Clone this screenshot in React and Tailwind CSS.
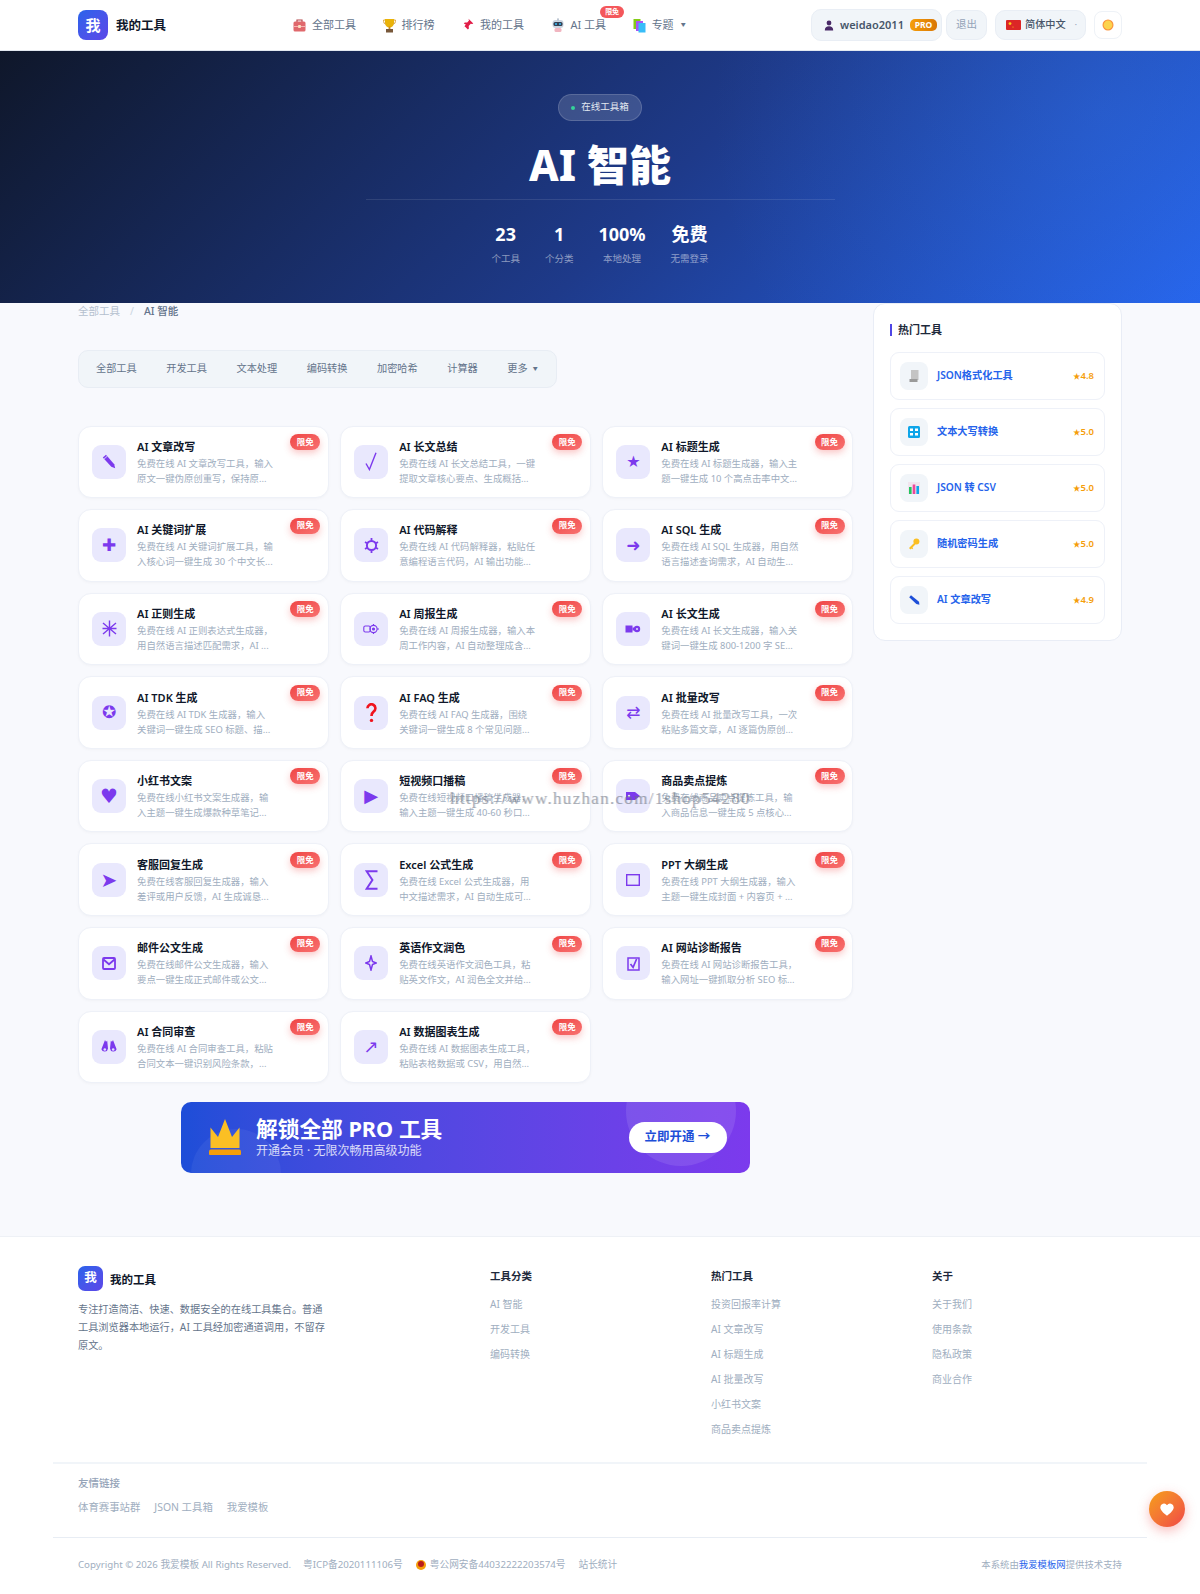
const Toolbox = () => (
  <svg width="13" height="14" viewBox="0 0 13 14">
    <path d="M4 4V2h5v2" fill="none" stroke="#b4464a" strokeWidth="1.2" />
    <rect x="0.5" y="3.5" width="12" height="10" rx="1.5" fill="#e0686c" />
    <rect x="0.5" y="8" width="12" height="1" fill="#f3b5b5" />
    <rect x="5.2" y="7" width="2.6" height="3" fill="#fde2c0" />
  </svg>
);

const Trophy = () => (
  <svg width="13" height="15" viewBox="0 0 13 15">
    <path d="M2 1h9v4a4.5 4.5 0 0 1-9 0z" fill="#eab308" />
    <path d="M2 2H0.6v1.5A2.5 2.5 0 0 0 3 6M11 2h1.4v1.5A2.5 2.5 0 0 1 10 6" fill="none" stroke="#d9a441" />
    <rect x="5.6" y="8.5" width="1.8" height="2.5" fill="#c98a1b" />
    <rect x="3" y="11" width="7" height="3.5" fill="#78583a" />
  </svg>
);

const Pin = () => (
  <svg width="13" height="14" viewBox="0 0 13 14">
    <path d="M7.5 0.8l4.8 4.6-1.2.6-1.4-.2-2 2.2.2 2.4-1 1L3.6 8.2 1 11.6 4.8 6.6 2.8 5.4l1-1 2.4.2 1.8-2z" fill="#e11d48" />
  </svg>
);

const Robot = () => (
  <svg width="14" height="15" viewBox="0 0 14 15">
    <rect x="1.5" y="2" width="11" height="8" rx="3" fill="#cbd5e1" />
    <rect x="2.5" y="4" width="9" height="4" rx="1.5" fill="#334155" />
    <circle cx="5" cy="6" r="1" fill="#38bdf8" />
    <circle cx="9" cy="6" r="1" fill="#38bdf8" />
    <rect x="3.5" y="10" width="7" height="4" rx="1.5" fill="#f1b5c0" />
    <rect x="6.4" y="0.4" width="1.2" height="2" fill="#94a3b8" />
  </svg>
);

const Books = () => (
  <svg width="13" height="15" viewBox="0 0 13 15">
    <rect x="0.5" y="1" width="7" height="10" fill="#84cc16" />
    <rect x="3" y="3" width="7" height="10" fill="#a855f7" />
    <rect x="5.5" y="5" width="7" height="9.5" fill="#38bdf8" />
  </svg>
);

const Person = () => (
  <svg width="10" height="11" viewBox="0 0 10 11">
    <circle cx="5" cy="3" r="2.4" fill="#4a2a68" />
    <path d="M0.8 10.5c0-2.8 1.6-4.2 4.2-4.2s4.2 1.4 4.2 4.2z" fill="#4a2a68" />
  </svg>
);

const Flag = () => (
  <svg width="15" height="10" viewBox="0 0 15 10">
    <rect width="15" height="10" rx="1" fill="#dc2626" />
    <circle cx="4" cy="3.6" r="1.4" fill="#facc15" />
    <circle cx="7" cy="7" r="0.6" fill="#facc15" />
  </svg>
);

const Sun = () => (
  <svg width="12" height="12" viewBox="0 0 12 12">
    <circle cx="6" cy="6" r="5.5" fill="#fb923c" />
    <circle cx="6" cy="6" r="4.4" fill="#fcd34d" />
  </svg>
);

const Pencil = () => (
  <svg width="14" height="15" viewBox="0 0 14 15" fill="#7c3aed">
    <path d="M0.8 3.6L4 0.8l8.2 9.4 1 4-3.9-1.4z" />
    <path d="M1.8 4.6L5 1.8l.6.7-3.2 2.8z" fill="#c4b5fd" />
  </svg>
);

const Check = () => (
  <svg width="12" height="19" viewBox="0 0 12 19" fill="none" stroke="#7c3aed" strokeWidth="1.4">
    <path d="M1 11.5l3.4 6L11 0.8" />
  </svg>
);

const Asterisk = () => (
  <svg width="15" height="17" viewBox="0 0 15 17" fill="none" stroke="#7c3aed" strokeWidth="1.4">
    <path d="M7.5 0.5v16M1 3l13 11M14 3L1 14M0.5 8.5h14" />
  </svg>
);

const Gear = () => (
  <svg width="15" height="17" viewBox="0 0 15 17" fill="none" stroke="#7c3aed">
    <circle cx="7.5" cy="8.5" r="4.6" strokeWidth="2" />
    <path d="M7.5 1v2.4M7.5 13.6V16M1 5l2 1.2M12 10.8l2 1.2M1 12l2-1.2M12 6.2L14 5" strokeWidth="1.8" />
  </svg>
);

const Question = () => (
  <svg width="11" height="20" viewBox="0 0 11 20" fill="none" stroke="#f0141e" strokeWidth="2.6">
    <path d="M1.4 5.2A4 4 0 1 1 7.6 8.6C6 9.8 5.5 10.5 5.5 13" />
    <circle cx="5.5" cy="17.4" r="1.7" fill="#f0141e" stroke="none" />
  </svg>
);

const Sigma = () => (
  <svg width="13" height="20" viewBox="0 0 13 20" fill="none" stroke="#7c3aed" strokeWidth="2">
    <path d="M12.5 1.2H1.6L7.4 10 1.6 18.8h10.9" />
  </svg>
);

const Outline = () => (
  <svg width="14" height="12" viewBox="0 0 14 12" fill="none" stroke="#7c3aed" strokeWidth="1.4">
    <rect x="0.7" y="0.7" width="12.6" height="10.6" />
  </svg>
);

const Mail = () => (
  <svg width="14" height="13" viewBox="0 0 14 13" fill="none" stroke="#7c3aed" strokeWidth="1.8">
    <rect x="1" y="1" width="12" height="11" rx="1" />
    <path d="M1.5 2.5L7 7.2l5.5-4.7" />
  </svg>
);

const Sparkle = () => (
  <svg width="12" height="16" viewBox="0 0 12 16" fill="none" stroke="#7c3aed" strokeWidth="1.5">
    <path d="M6 1l1.5 5.5L11 8 7.5 9.5 6 15 4.5 9.5 1 8l3.5-1.5z" />
  </svg>
);

const CheckBox = () => (
  <svg width="13" height="15" viewBox="0 0 13 15" fill="none" stroke="#7c3aed" strokeWidth="1.5">
    <rect x="1" y="2" width="11" height="12" />
    <path d="M3.5 8l2.6 3.4L9.6 3" strokeWidth="1.7" />
  </svg>
);

const Weekly = () => (
  <svg width="16" height="12" viewBox="0 0 16 12" fill="none" stroke="#7c3aed" strokeWidth="1.1">
    <rect x="0.8" y="3" width="6.5" height="6" rx="1.5" />
    <circle cx="10.5" cy="6" r="3.6" />
    <circle cx="10.5" cy="6" r="1" fill="#7c3aed" />
    <path d="M14 6h2M10.5 1v1.5M10.5 9.5V11" />
  </svg>
);

const Longform = () => (
  <svg width="16" height="10" viewBox="0 0 16 10" fill="#7c3aed">
    <rect x="0.5" y="1.5" width="7" height="7" />
    <path d="M7.5 3.5h2V6.5h-2z" />
    <circle cx="12" cy="5" r="3.2" />
    <circle cx="12" cy="5" r="1" fill="#e0e0fc" />
  </svg>
);

const Goods = () => (
  <svg width="16" height="10" viewBox="0 0 16 10" fill="#7c3aed">
    <path d="M1 1h9l5 4-5 4H1z" />
    <circle cx="4" cy="5" r="1.2" fill="#e0e0fc" />
  </svg>
);

const Contract = () => (
  <svg width="16" height="15" viewBox="0 0 16 15" fill="#7c3aed">
    <path d="M4 1l1 1.8 1.2-1L7 9.5a3.4 3.4 0 0 1-6.6.8z" />
    <path d="M12 1l-1 1.8-1.2-1L9 9.5a3.4 3.4 0 0 0 6.6.8z" />
    <circle cx="3.8" cy="10.5" r="1.3" fill="#e0e0fc" />
    <circle cx="12.2" cy="10.5" r="1.3" fill="#e0e0fc" />
  </svg>
);

const tools = [
  { title: "AI 文章改写", desc: "免费在线 AI 文章改写工具，输入\n原文一键伪原创重写，保持原...", icon: Pencil },
  { title: "AI 长文总结", desc: "免费在线 AI 长文总结工具，一键\n提取文章核心要点、生成概括...", icon: Check },
  { title: "AI 标题生成", desc: "免费在线 AI 标题生成器，输入主\n题一键生成 10 个高点击率中文...", glyph: "★", size: "text-[16px]" },
  { title: "AI 关键词扩展", desc: "免费在线 AI 关键词扩展工具，输\n入核心词一键生成 30 个中文长...", glyph: "✚", size: "text-[17px]" },
  { title: "AI 代码解释", desc: "免费在线 AI 代码解释器，粘贴任\n意编程语言代码，AI 输出功能...", icon: Gear },
  { title: "AI SQL 生成", desc: "免费在线 AI SQL 生成器，用自然\n语言描述查询需求，AI 自动生...", glyph: "➜", size: "text-[17px]" },
  { title: "AI 正则生成", desc: "免费在线 AI 正则表达式生成器，\n用自然语言描述匹配需求，AI ...", icon: Asterisk },
  { title: "AI 周报生成", desc: "免费在线 AI 周报生成器，输入本\n周工作内容，AI 自动整理成含...", icon: Weekly },
  { title: "AI 长文生成", desc: "免费在线 AI 长文生成器，输入关\n键词一键生成 800-1200 字 SE...", icon: Longform },
  { title: "AI TDK 生成", desc: "免费在线 AI TDK 生成器，输入\n关键词一键生成 SEO 标题、描...", glyph: "✪", size: "text-[17px]" },
  { title: "AI FAQ 生成", desc: "免费在线 AI FAQ 生成器，围绕\n关键词一键生成 8 个常见问题...", icon: Question },
  { title: "AI 批量改写", desc: "免费在线 AI 批量改写工具，一次\n粘贴多篇文章，AI 逐篇伪原创...", glyph: "⇄", size: "text-[17px]" },
  { title: "小红书文案", desc: "免费在线小红书文案生成器，输\n入主题一键生成爆款种草笔记...", glyph: "♥", size: "text-[20px]" },
  { title: "短视频口播稿", desc: "免费在线短视频口播稿生成器，\n输入主题一键生成 40-60 秒口...", glyph: "▶", size: "text-[18px]" },
  { title: "商品卖点提炼", desc: "免费在线商品卖点提炼工具，输\n入商品信息一键生成 5 点核心...", icon: Goods },
  { title: "客服回复生成", desc: "免费在线客服回复生成器，输入\n差评或用户反馈，AI 生成诚恳...", glyph: "➤", size: "text-[20px]" },
  { title: "Excel 公式生成", desc: "免费在线 Excel 公式生成器，用\n中文描述需求，AI 自动生成可...", icon: Sigma },
  { title: "PPT 大纲生成", desc: "免费在线 PPT 大纲生成器，输入\n主题一键生成封面 + 内容页 + ...", icon: Outline },
  { title: "邮件公文生成", desc: "免费在线邮件公文生成器，输入\n要点一键生成正式邮件或公文...", icon: Mail },
  { title: "英语作文润色", desc: "免费在线英语作文润色工具，粘\n贴英文作文，AI 润色全文并给...", icon: Sparkle },
  { title: "AI 网站诊断报告", desc: "免费在线 AI 网站诊断报告工具，\n输入网址一键抓取分析 SEO 标...", icon: CheckBox },
  { title: "AI 合同审查", desc: "免费在线 AI 合同审查工具，粘贴\n合同文本一键识别风险条款，...", icon: Contract },
  { title: "AI 数据图表生成", desc: "免费在线 AI 数据图表生成工具，\n粘贴表格数据或 CSV，用自然...", glyph: "↗", size: "text-[18px]" },
];

const navItems = [
  { icon: Toolbox, label: "全部工具" },
  { icon: Trophy, label: "排行榜" },
  { icon: Pin, label: "我的工具" },
  { icon: Robot, label: "AI 工具", badge: true },
  { icon: Books, label: "专题", caret: true },
];

const stats = [
  { value: "23", label: "个工具" },
  { value: "1", label: "个分类" },
  { value: "100%", label: "本地处理" },
  { value: "免费", label: "无需登录" },
];

const categories = ["全部工具", "开发工具", "文本处理", "编码转换", "加密哈希", "计算器"];

const hotTools = [
  {
    name: "JSON格式化工具",
    rating: "4.8",
    icon: (
      <svg width="12" height="14" viewBox="0 0 12 14">
        <rect x="3" y="1" width="7.5" height="10" fill="#c4c4c4" />
        <rect x="1.5" y="10" width="8" height="3" fill="#9a9a9a" />
      </svg>
    ),
  },
  {
    name: "文本大写转换",
    rating: "5.0",
    icon: (
      <svg width="12" height="12" viewBox="0 0 12 12">
        <rect width="12" height="12" rx="1.5" fill="#0ea5e9" />
        <rect x="2" y="2.5" width="3" height="2.5" fill="#fff" />
        <rect x="7" y="2.5" width="3" height="2.5" fill="#fff" />
        <rect x="2" y="7" width="3" height="2.5" fill="#fff" />
        <rect x="7" y="7" width="3" height="2.5" fill="#fff" />
      </svg>
    ),
  },
  {
    name: "JSON 转 CSV",
    rating: "5.0",
    icon: (
      <svg width="12" height="12" viewBox="0 0 12 12">
        <rect width="12" height="12" fill="#f1e4ee" />
        <rect x="1" y="5" width="2.6" height="7" fill="#22c55e" />
        <rect x="4.7" y="2.5" width="2.6" height="9.5" fill="#ec4899" />
        <rect x="8.4" y="4" width="2.6" height="8" fill="#0ea5e9" />
      </svg>
    ),
  },
  {
    name: "随机密码生成",
    rating: "5.0",
    icon: (
      <svg width="12" height="12" viewBox="0 0 12 12">
        <circle cx="8.4" cy="3.6" r="3" fill="#fbbf24" />
        <path d="M6.5 4.5L1 10l1.4 1.4 1-1 .8.8 1-1-.8-.8 3-3z" fill="#fbbf24" />
      </svg>
    ),
  },
  {
    name: "AI 文章改写",
    rating: "4.9",
    icon: (
      <svg width="12" height="12" viewBox="0 0 12 12">
        <path d="M1.2 3.2L3 1.2l8 6.6.4 3-3-.8z" fill="#1d4ed8" />
      </svg>
    ),
  },
];

const footerCols = [
  { title: "工具分类", links: ["AI 智能", "开发工具", "编码转换"] },
  { title: "热门工具", links: ["投资回报率计算", "AI 文章改写", "AI 标题生成", "AI 批量改写", "小红书文案", "商品卖点提炼"] },
  { title: "关于", links: ["关于我们", "使用条款", "隐私政策", "商业合作"] },
];

const ToolCard = ({ tool }) => {
  const Icon = tool.icon;
  return (
    <div className="relative h-[72.6px] flex items-center gap-[11px] pl-[13px] bg-white rounded-[13px] border border-[#eef1f8] shadow-[0_1px_3px_rgba(15,23,42,0.03)]">
      <div className="w-[34px] h-[34px] shrink-0 rounded-[9px] bg-[#e9e8fd] flex items-center justify-center">
        {Icon ? (
          <Icon />
        ) : (
          <span className={`font-['DejaVu_Sans',sans-serif] leading-none text-[#7c3aed] ${tool.size}`}>{tool.glyph}</span>
        )}
      </div>
      <div className="min-w-0 pt-[1px]">
        <div className="text-[11px] leading-[16px] font-semibold text-[#0f172a] whitespace-nowrap">{tool.title}</div>
        <div className="mt-px text-[9.4px] leading-[15px] text-[#a0aec0] whitespace-pre">{tool.desc}</div>
      </div>
      <span className="absolute top-[7.5px] right-[7.5px] w-[30px] h-[16px] rounded-full bg-linear-to-br from-[#ef4444] to-[#f87171] text-white text-[8.5px] font-bold flex items-center justify-center shadow-[0_3px_7px_rgba(239,68,68,0.3)]">
        限免
      </span>
    </div>
  );
};

const Logo = ({ box, text, gap, name }) => (
  <div className={`flex items-center ${gap}`}>
    <div className={`${box} ${text} bg-linear-to-br from-[#2563eb] to-[#5b46e8] text-white font-bold flex items-center justify-center`}>我</div>
    <span className={`${name} mt-[2px] font-bold text-[#0f172a]`}>我的工具</span>
  </div>
);

export default function App() {
  return (
    <div className="relative h-[1594px] flex flex-col bg-[#f8f9fd] font-['Noto_Sans','Noto_Sans_CJK_SC',sans-serif] overflow-hidden">
      <header className="h-[51px] shrink-0 bg-white flex items-center pl-[78px] pr-[78px] border-b border-[#e2e8f0]">
        <div className="w-[214px] shrink-0">
          <Logo box="w-[30px] h-[30px] rounded-[8px]" text="text-[15px]" gap="gap-[8px]" name="text-[12.5px]" />
        </div>
        <nav className="flex items-center gap-[26.5px] ml-[1px]">
          {navItems.map((item) => {
            const Icon = item.icon;
            return (
              <div key={item.label} className="relative flex items-center gap-[6px] text-[11px] text-[#64748b]">
                <Icon />
                <span>{item.label}</span>
                {item.caret && <span className="text-[5px] ml-[1px]">▼</span>}
                {item.badge && (
                  <span className="absolute -top-[11px] -right-[18px] w-[24px] h-[12px] rounded-full bg-[#f4575b] text-white text-[7px] font-bold flex items-center justify-center">
                    限免
                  </span>
                )}
              </div>
            );
          })}
        </nav>
        <div className="ml-auto flex items-center">
          <div className="h-[32px] w-[131px] rounded-[10px] bg-[#f1f5f9] border border-[#e9eef5] flex items-center pl-[12px] gap-[6px] text-[11px] font-semibold text-[#475569]">
            <Person />
            <span>weidao2011</span>
            <span className="w-[27px] h-[12px] rounded-[5px] bg-linear-to-r from-[#f59e0b] to-[#d97706] text-white text-[8.5px] font-bold flex items-center justify-center">PRO</span>
          </div>
          <div className="ml-[4px] h-[30px] w-[41px] rounded-[10px] bg-[#f1f5f9] border border-[#e9eef5] flex items-center justify-center text-[10.5px] text-[#94a3b8]">退出</div>
          <div className="ml-[8px] h-[30px] w-[91px] rounded-[10px] bg-[#f1f5f9] border border-[#e9eef5] flex items-center pl-[10px] gap-[4px] text-[10.2px] font-medium text-[#475569]">
            <Flag />
            <span>简体中文</span>
            <span className="text-[8px] text-[#94a3b8] ml-[5px]">·</span>
          </div>
          <div className="ml-[8px] w-[28px] h-[28px] rounded-[8px] bg-white border border-[#eef2f7] flex items-center justify-center">
            <Sun />
          </div>
        </div>
      </header>

      <section className="relative h-[252px] shrink-0 bg-[radial-gradient(circle_at_92%_25%,rgba(59,130,246,0.22),transparent_35%),linear-gradient(135deg,#0f172a_0%,#1e3a8a_55%,#2563eb_100%)] flex flex-col items-center pt-[43px]">
        <div className="h-[27px] w-[84px] rounded-full bg-white/15 border border-white/15 flex items-center justify-center gap-[6px] text-[9.5px] text-[#e2e8f0]">
          <span className="w-[4px] h-[4px] rounded-full bg-[#34d399]" />
          在线工具箱
        </div>
        <h1 className="mt-[16px] text-[42px] leading-[56px] font-extrabold text-white">AI 智能</h1>
        <div className="mt-[6px] w-[469px] h-px bg-white/10" />
        <div className="mt-[20px] flex gap-[25px]">
          {stats.map((stat) => (
            <div key={stat.label} className="flex flex-col items-center">
              <div className="text-[18px] leading-[28px] font-bold text-white">{stat.value}</div>
              <div className="mt-[4px] text-[9.5px] leading-[14px] text-white/50">{stat.label}</div>
            </div>
          ))}
        </div>
      </section>

      <main className="flex items-start gap-[20px] px-[78px] shrink-0">
        <div className="w-[775px] shrink-0">
          <div className="h-[18px] flex items-center text-[10.5px] text-[#b4bfce]">
            <span>全部工具</span>
            <span className="mx-[10px] text-[#cbd5e1]">/</span>
            <span className="font-medium text-[#64748b]">AI 智能</span>
          </div>
          <div className="mt-[29px] w-[479px] h-[38px] rounded-[10px] bg-[#f1f5f9] border border-[#e8edf4] flex items-center pl-[17px] gap-[29.5px] text-[10.2px] text-[#64748b]">
            {categories.map((cat) => (
              <span key={cat}>{cat}</span>
            ))}
            <span className="flex items-center gap-[5px]">
              更多<span className="text-[5px]">▼</span>
            </span>
          </div>
          <div className="mt-[37.5px] grid grid-cols-3 gap-x-[11.5px] gap-y-[11px]">
            {tools.map((tool) => (
              <ToolCard key={tool.title} tool={tool} />
            ))}
          </div>
          <div className="relative mt-[18.5px] mx-auto w-[569px] h-[71px] rounded-[10px] bg-linear-to-r from-[#1d4ed8] to-[#7c3aed] overflow-hidden flex items-center">
            <div className="absolute left-[10px] top-[27px] w-[90px] h-[90px] rounded-full bg-white/5" />
            <div className="absolute left-[445px] -top-[46px] w-[110px] h-[110px] rounded-full bg-white/10" />
            <svg className="relative ml-[28px] shrink-0" width="32" height="36" viewBox="0 0 32 36">
              <path d="M1.5 8.5L9 18 16 0l7 18 7.5-9.5V29h-29z" fill="#fbbf24" />
              <rect x="0" y="30.5" width="32" height="6" rx="2" fill="#f59e0b" />
            </svg>
            <div className="relative ml-[15px] pt-[1px] text-white">
              <div className="text-[21.7px] leading-[26px] font-bold">解锁全部 PRO 工具</div>
              <div className="text-[12px] leading-[17px] text-white/80">开通会员 · 无限次畅用高级功能</div>
            </div>
            <div className="relative ml-auto mr-[23.5px] w-[98px] h-[31px] pt-[1px] rounded-full bg-white flex items-center justify-center text-[12.5px] font-bold text-[#1d4ed8]">
              立即开通 →
            </div>
          </div>
        </div>

        <aside className="w-[249px] h-[338px] bg-white rounded-[12px] border border-[#e9edf6] px-[16px] pt-[18px]">
          <div className="flex items-center gap-[6px] text-[11px] leading-[16px] font-bold text-[#1e293b]">
            <span className="w-[2px] h-[12px] bg-[#4f46e5]" />
            热门工具
          </div>
          <div className="mt-[14px] flex flex-col gap-[8.5px]">
            {hotTools.map((hot) => (
              <div key={hot.name} className="h-[47.5px] rounded-[9px] border border-[#eef1f8] flex items-center pl-[9px] pr-[10px]">
                <div className="w-[28px] h-[28px] rounded-[8px] bg-[#f1f5f9] flex items-center justify-center">{hot.icon}</div>
                <span className="ml-[9px] text-[10.2px] font-semibold text-[#2563eb]">{hot.name}</span>
                <span className="ml-auto text-[9.5px] font-semibold text-[#f59e0b]">
                  <span className="text-[7.5px]">★</span>
                  {hot.rating}
                </span>
              </div>
            ))}
          </div>
        </aside>
      </main>

      <footer className="flex-1 mt-[63px] bg-white border-t border-[#eef1f6]">
        <div className="grid grid-cols-[412px_221px_221px_1fr] px-[78px] pt-[29px] pb-[24px]">
          <div>
            <Logo box="w-[25px] h-[25px] rounded-[7px]" text="text-[12.5px]" gap="gap-[7px]" name="text-[11.5px]" />
            <p className="mt-[9px] w-[248px] text-[10.2px] leading-[18px] text-[#64748b]">
              专注打造简洁、快速、数据安全的在线工具集合。普通工具浏览器本地运行，AI 工具经加密通道调用，不留存原文。
            </p>
          </div>
          {footerCols.map((col) => (
            <div key={col.title}>
              <div className="text-[10.5px] leading-[20px] font-semibold text-[#1e293b]">{col.title}</div>
              <div className="mt-[9px] flex flex-col gap-[7px] text-[10px] leading-[18px] text-[#a0aec0]">
                {col.links.map((link) => (
                  <span key={link}>{link}</span>
                ))}
              </div>
            </div>
          ))}
        </div>
        <div className="mx-[53px] px-[25px] border-t-2 border-[#f1f5f9] pt-[10px] h-[75px]">
          <div className="text-[10.5px] leading-[18px] font-medium text-[#94a3b8]">友情链接</div>
          <div className="mt-[6px] flex gap-[14px] text-[10.4px] leading-[18px] text-[#a0aec0]">
            <span>体育赛事站群</span>
            <span>JSON 工具箱</span>
            <span>我爱模板</span>
          </div>
        </div>
        <div className="mx-[53px] px-[25px] border-t border-[#e8edf4] flex items-start pt-[18px] text-[9.7px] leading-[18px] text-[#a0aec0]">
          <span>Copyright © 2026 我爱模板 All Rights Reserved.</span>
          <span className="ml-[12px]">粤ICP备2020111106号</span>
          <span className="ml-[13px] flex items-center gap-[4px]">
            <svg width="10" height="12" viewBox="0 0 10 12">
              <circle cx="5" cy="6" r="5" fill="#f59e0b" />
              <circle cx="5" cy="5" r="3" fill="#b91c1c" />
            </svg>
            粤公网安备44032222203574号
          </span>
          <span className="ml-[13px]">站长统计</span>
          <span className="ml-auto text-[9.4px]">
            本系统由<span className="text-[#2563eb]">我爱模板网</span>提供技术支持
          </span>
        </div>
      </footer>

      <div className="absolute left-[450px] top-[786px] font-['Liberation_Serif',serif] text-[17px] tracking-[1.3px] text-[#6b7280]/50 [text-shadow:1px_0_0_rgba(107,114,128,0.25)] whitespace-nowrap pointer-events-none">
        https://www.huzhan.com/1shop54280
      </div>

      <div className="fixed right-[15px] bottom-[67px] w-[36px] h-[36px] rounded-full bg-linear-to-br from-[#f59e0b] to-[#ef4444] flex items-center justify-center shadow-[0_4px_12px_rgba(239,68,68,0.35)]">
        <svg width="14" height="13" viewBox="0 0 24 22" fill="#fff">
          <path d="M12 21.5C5 16 0.5 12 0.5 7A6.3 6.3 0 0 1 12 3.6 6.3 6.3 0 0 1 23.5 7c0 5-4.5 9-11.5 14.5z" />
        </svg>
      </div>
    </div>
  );
}
